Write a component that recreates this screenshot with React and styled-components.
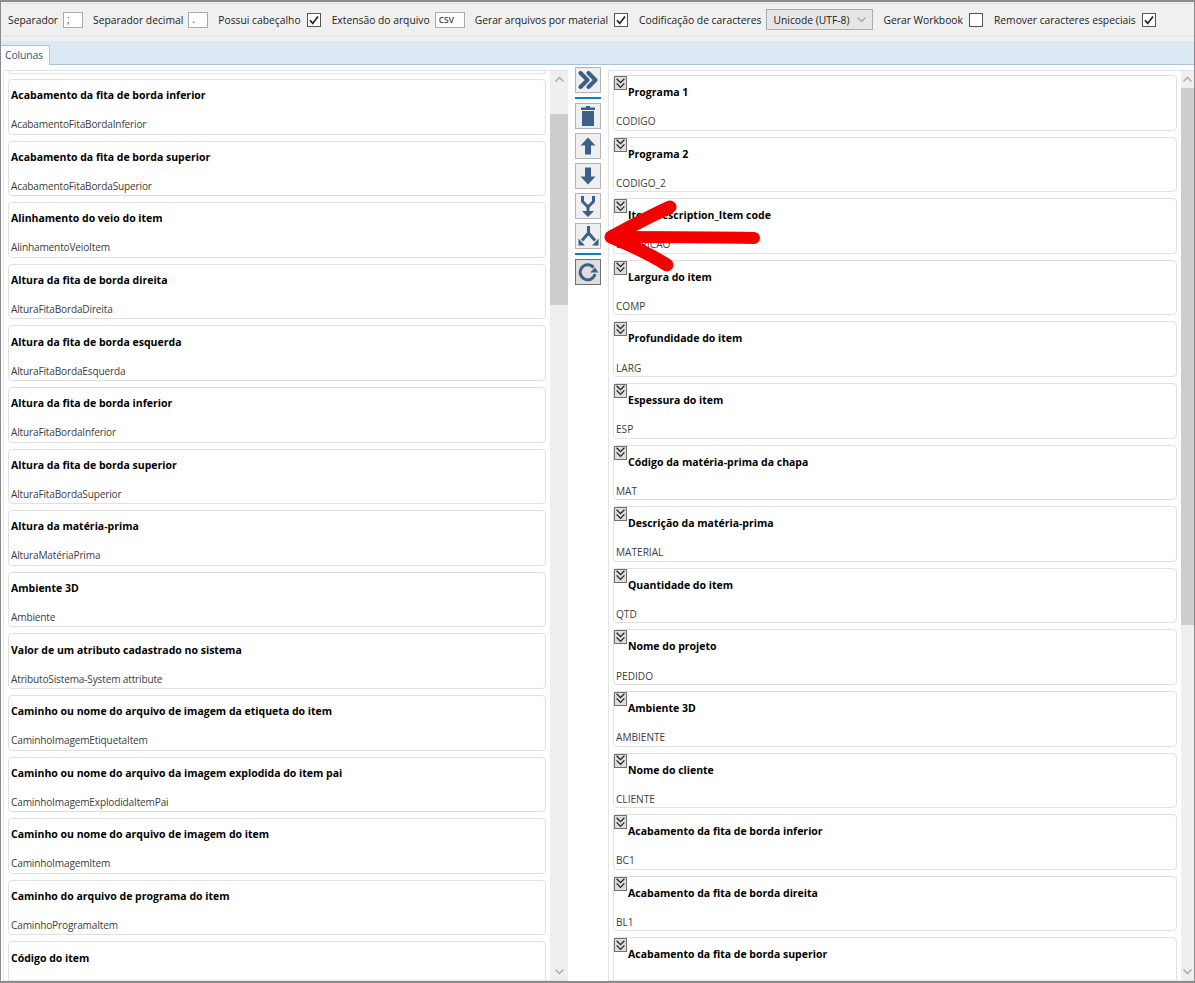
import React from 'react';
import styled, { createGlobalStyle } from 'styled-components';

const GlobalStyle = createGlobalStyle`
  html, body {
    margin: 0;
    padding: 0;
    background: #fff;
  }
  * {
    box-sizing: border-box;
  }
`;

const ICON_BLUE = '#3c6188';

const leftColumns = [
  ['Acabamento da fita de borda inferior', 'AcabamentoFitaBordaInferior'],
  ['Acabamento da fita de borda superior', 'AcabamentoFitaBordaSuperior'],
  ['Alinhamento do veio do item', 'AlinhamentoVeioItem'],
  ['Altura da fita de borda direita', 'AlturaFitaBordaDireita'],
  ['Altura da fita de borda esquerda', 'AlturaFitaBordaEsquerda'],
  ['Altura da fita de borda inferior', 'AlturaFitaBordaInferior'],
  ['Altura da fita de borda superior', 'AlturaFitaBordaSuperior'],
  ['Altura da matéria-prima', 'AlturaMatériaPrima'],
  ['Ambiente 3D', 'Ambiente'],
  ['Valor de um atributo cadastrado no sistema', 'AtributoSistema-System attribute'],
  ['Caminho ou nome do arquivo de imagem da etiqueta do item', 'CaminhoImagemEtiquetaItem'],
  ['Caminho ou nome do arquivo da imagem explodida do item pai', 'CaminhoImagemExplodidaItemPai'],
  ['Caminho ou nome do arquivo de imagem do item', 'CaminhoImagemItem'],
  ['Caminho do arquivo de programa do item', 'CaminhoProgramaItem'],
  // last row is cut by the pane, its field name is below the fold
  ['Código do item', null],
];

const rightColumns = [
  ['Programa 1', 'CODIGO'],
  ['Programa 2', 'CODIGO_2'],
  ['Item description_Item code', 'DESCRICAO'],
  ['Largura do item', 'COMP'],
  ['Profundidade do item', 'LARG'],
  ['Espessura do item', 'ESP'],
  ['Código da matéria-prima da chapa', 'MAT'],
  ['Descrição da matéria-prima', 'MATERIAL'],
  ['Quantidade do item', 'QTD'],
  ['Nome do projeto', 'PEDIDO'],
  ['Ambiente 3D', 'AMBIENTE'],
  ['Nome do cliente', 'CLIENTE'],
  ['Acabamento da fita de borda inferior', 'BC1'],
  ['Acabamento da fita de borda direita', 'BL1'],
  ['Acabamento da fita de borda superior', null],
];

const Frame = styled.div`
  position: relative;
  width: 1195px;
  height: 983px;
  overflow: hidden;
  display: flex;
  flex-direction: column;
  background: #f0f0f0;
  border: 1px solid #8c8c8c;
  border-width: 2px 1px 2px 1px;
  font-family: 'Open Sans', 'Noto Sans', sans-serif;
  font-size: 10.5px;
  color: #222;
`;

const Toolbar = styled.div`
  height: 34px;
  margin: 1px 0 0 1px;
  padding: 0 0 0 6px;
  display: flex;
  align-items: center;
  gap: 10px;
  background: #f0f0f0;
  border-top: 1px solid #e6e6e6;
  border-bottom: 2px solid #e6e6e6;
  border-radius: 3px 0 0 3px;
  font-size: 10.3px;
  flex: none;
`;

const Field = styled.label`
  display: flex;
  align-items: center;
  gap: ${({ $gap }) => $gap ?? 5}px;
  white-space: nowrap;
`;

const TextBox = styled.div`
  width: ${({ $w }) => $w}px;
  height: 16px;
  padding: 0 0 0 3px;
  background: #fff;
  border: 1px solid #a9a9a9;
  line-height: 13px;
  font-size: 10.5px;
  color: ${({ $accent }) => ($accent ? '#7a1fa0' : '#222')};
`;

const Check = styled.div`
  width: 14px;
  height: 14px;
  margin-right: 1px;
  background: #fff;
  border: 1px solid #555;
  display: flex;
  align-items: center;
  justify-content: center;
`;

const SelectBox = styled.div`
  width: 107px;
  height: 21px;
  padding: 0 5px 0 6px;
  display: flex;
  align-items: center;
  justify-content: space-between;
  background: #e6e6e6;
  border: 1px solid #adadad;
`;

const TabStrip = styled.div`
  height: 24px;
  margin-top: 4px;
  padding: 4px 0 0 0;
  display: flex;
  background: #dce8f3;
  border-bottom: 1px solid #a9c3dc;
  flex: none;
`;

const Tab = styled.div`
  width: 49px;
  height: 20px;
  padding-left: 4px;
  line-height: 18px;
  letter-spacing: -0.2px;
  color: #2c5a80;
  background: #fff;
  border: 1px solid #a9c3dc;
  border-bottom: none;
  border-left: none;
  border-radius: 2px 2px 0 0;
`;

const Body = styled.div`
  flex: 1;
  min-height: 0;
  padding: 0 0 0 2px;
  display: flex;
  background: #fff;
`;

const ListPane = styled.div`
  width: ${({ $w }) => $w}px;
  margin-top: 5px;
  flex: none;
  display: flex;
  overflow: hidden;
  border: 1px solid #e4e4e4;
  border-right: none;
`;

const ListColumn = styled.div`
  flex: 1;
  min-width: 0;
  padding: ${({ $top }) => $top}px 4px 0 ${({ $left }) => $left}px;
  display: flex;
  flex-direction: column;
  gap: 6px;
`;

const Card = styled.div`
  position: relative;
  height: 55.6px;
  flex: none;
  padding: ${({ $top }) => $top}px 0 0 ${({ $indent }) => $indent}px;
  background: #fff;
  border: 1px solid #e0e0e0;
  border-radius: 4px;
`;

const PeekCard = styled.div`
  height: 3px;
  margin-bottom: -1px;
  flex: none;
  border-bottom: 1px solid #e0e0e0;
  border-left: 1px solid #e0e0e0;
  border-right: 1px solid #e0e0e0;
  border-radius: 0 0 4px 4px;
`;

const CardTitle = styled.div`
  font-weight: 700;
  color: #000;
  line-height: 14px;
  white-space: nowrap;
`;

const CardField = styled.div`
  margin: ${({ $gap }) => $gap}px 0 0 ${({ $shift }) => $shift}px;
  font-size: 10.1px;
  letter-spacing: ${({ $spacing }) => $spacing}px;
  color: #3d3d3d;
  line-height: 14px;
  white-space: nowrap;
`;

const Toggle = styled.div`
  position: absolute;
  top: 0;
  left: 0;
  width: 13px;
  height: 14px;
  display: flex;
  align-items: center;
  justify-content: center;
  background: #dedede;
  border: 1px solid #707070;
`;

const ScrollTrack = styled.div`
  width: ${({ $w }) => $w}px;
  flex: none;
  display: flex;
  flex-direction: column;
  align-items: stretch;
  background: #efefef;
`;

const ScrollEnd = styled.div`
  height: 17px;
  flex: none;
  display: flex;
  align-items: center;
  justify-content: center;
`;

const ScrollRail = styled.div`
  flex: 1;
  min-height: 0;
  padding-top: ${({ $top }) => $top}px;
`;

const ScrollThumb = styled.div`
  height: ${({ $h }) => $h}px;
  background: #cdcdcd;
`;

const ButtonColumn = styled.div`
  width: 40px;
  flex: none;
  padding: 2px 7px 0;
  display: flex;
  flex-direction: column;
  gap: 4px;
`;

const ToolButton = styled.div`
  width: 26px;
  height: 26px;
  display: flex;
  align-items: center;
  justify-content: center;
  background: ${({ $pressed }) => ($pressed ? '#dedede' : '#efefef')};
  border: 1px solid ${({ $pressed }) => ($pressed ? '#707070' : '#b4b4b4')};
`;

const Separator = styled.div`
  height: 2px;
  width: 26px;
  background: #0a84b8;
`;

const ArrowOverlay = styled.svg`
  position: absolute;
  left: 599px;
  top: 188px;
  pointer-events: none;
  filter: blur(0.5px);
`;

const Chevron = ({ up }) => (
  <svg width="11" height="7" viewBox="0 0 11 7">
    <path d={up ? 'M1.5 5.5 5.5 1.5 9.5 5.5' : 'M1.5 1.5 5.5 5.5 9.5 1.5'} fill="none" stroke="#a8a8a8" strokeWidth="1.4" />
  </svg>
);

const CheckMark = () => (
  <svg width="12" height="12" viewBox="0 0 12 12">
    <path d="M2 6.2 4.7 9.4 10 2.4" fill="none" stroke="#222" strokeWidth="1.7" />
  </svg>
);

const ToggleIcon = () => (
  <svg width="9" height="11" viewBox="0 0 9 11">
    <path d="M.6 .8 4.500 4.600 8.400 .8M.6 5.400 4.500 9.400 8.400 5.400" fill="none" stroke="#222" strokeWidth="1.3" />
  </svg>
);

const ForwardIcon = () => (
  <svg width="20" height="18" viewBox="0 0 20 18">
    <path d="M2.500 2 9.500 9 2.500 16M10.500 2 17.500 9 10.500 16" fill="none" stroke={ICON_BLUE} strokeWidth="4" strokeLinecap="round" strokeLinejoin="round" />
  </svg>
);

const TrashIcon = () => (
  <svg width="14" height="20" viewBox="0 0 14 20" fill={ICON_BLUE}>
    <path d="M5 0h4v1.500h5V4H0V1.500h5zM1 5h12v15H1z" />
  </svg>
);

const UpIcon = () => (
  <svg width="16" height="18" viewBox="0 0 16 18" fill={ICON_BLUE}>
    <path d="M8 .5 15.500 8.500H11V17.500H5V8.500H.5z" />
  </svg>
);

const DownIcon = () => (
  <svg width="16" height="18" viewBox="0 0 16 18" fill={ICON_BLUE}>
    <path d="M5 .5H11V9.500H15.500L8 17.500.5 9.500H5z" />
  </svg>
);

const MergeIcon = () => (
  <svg width="16" height="21" viewBox="0 0 16 21">
    <path d="M2.500 0v5.500L8 11l5.500-5.500V0" fill="none" stroke={ICON_BLUE} strokeWidth="3" />
    <path d="M6.500 10h3v5H14L8 21 2 15h4.500z" fill={ICON_BLUE} />
  </svg>
);

const SplitIcon = () => (
  <svg width="21" height="21" viewBox="0 0 21 21">
    <path d="M10.500 0v7L4 14.500M10.500 7 17 14.500" fill="none" stroke={ICON_BLUE} strokeWidth="3" />
    <path d="M.5 12.500 7 19.500H.5zM20.500 12.500 14 19.500h6.500z" fill={ICON_BLUE} />
  </svg>
);

const RefreshIcon = () => (
  <svg width="21" height="19" viewBox="0 0 21 19">
    <path d="M15.500 4.500A7.500 7.500 0 1 0 17 11" fill="none" stroke={ICON_BLUE} strokeWidth="3" />
    <path d="M12 9.500h8.500L17 4.500z" fill={ICON_BLUE} />
  </svg>
);

const Scrollbar = ({ width, top, height }) => (
  <ScrollTrack $w={width}>
    <ScrollEnd><Chevron up /></ScrollEnd>
    <ScrollRail $top={top}>
      <ScrollThumb $h={height} />
    </ScrollRail>
    <ScrollEnd><Chevron /></ScrollEnd>
  </ScrollTrack>
);

export default function App() {
  return (
    <>
      <GlobalStyle />
      <Frame>
        <Toolbar>
          <Field><span>Separador</span><TextBox $w={20} $accent>;</TextBox></Field>
          <Field><span>Separador decimal</span><TextBox $w={20} $accent>.</TextBox></Field>
          <Field $gap={6}><span>Possui cabeçalho</span><Check><CheckMark /></Check></Field>
          <Field><span>Extensão do arquivo</span><TextBox $w={30}>csv</TextBox></Field>
          <Field $gap={6}><span>Gerar arquivos por material</span><Check><CheckMark /></Check></Field>
          <Field>
            <span>Codificação de caracteres</span>
            <SelectBox><span>Unicode (UTF-8)</span><Chevron /></SelectBox>
          </Field>
          <Field $gap={6}><span>Gerar Workbook</span><Check /></Field>
          <Field $gap={6}><span>Remover caracteres especiais</span><Check><CheckMark /></Check></Field>
        </Toolbar>
        <TabStrip><Tab>Colunas</Tab></TabStrip>
        <Body>
          <ListPane $w={565}>
            <ListColumn $top={0} $left={4}>
              <PeekCard />
              {leftColumns.map(([title, field]) => (
                <Card key={title} $indent={2} $top={8.3}>
                  <CardTitle>{title}</CardTitle>
                  {field && <CardField $shift={0} $gap={15} $spacing={-0.17}>{field}</CardField>}
                </Card>
              ))}
            </ListColumn>
            <Scrollbar width={18} top={26} height={191} />
          </ListPane>
          <ButtonColumn>
            <ToolButton><ForwardIcon /></ToolButton>
            <Separator />
            <ToolButton><TrashIcon /></ToolButton>
            <ToolButton><UpIcon /></ToolButton>
            <ToolButton><DownIcon /></ToolButton>
            <ToolButton><MergeIcon /></ToolButton>
            <ToolButton><SplitIcon /></ToolButton>
            <Separator />
            <ToolButton $pressed><RefreshIcon /></ToolButton>
          </ButtonColumn>
          <ListPane $w={586}>
            <ListColumn $top={4} $left={4}>
              {rightColumns.map(([title, field]) => (
                <Card key={title} $indent={14} $top={9}>
                  <Toggle><ToggleIcon /></Toggle>
                  <CardTitle>{title}</CardTitle>
                  {field && <CardField $shift={-12} $gap={15.3} $spacing={0}>{field}</CardField>}
                </Card>
              ))}
            </ListColumn>
            <Scrollbar width={13} top={0} height={537} />
          </ListPane>
        </Body>
        <ArrowOverlay width="170" height="90" viewBox="0 0 170 90">
          <path
            d="M154 48 C110 47 60 47 11 47"
            fill="none"
            stroke="#f40000"
            strokeWidth="12"
            strokeLinecap="round"
          />
          <path
            d="M11 47 C30 37 48 27 70 17 M11 47 C30 55 50 64 67 75"
            fill="none"
            stroke="#f40000"
            strokeWidth="13"
            strokeLinecap="round"
          />
        </ArrowOverlay>
      </Frame>
    </>
  );
}
